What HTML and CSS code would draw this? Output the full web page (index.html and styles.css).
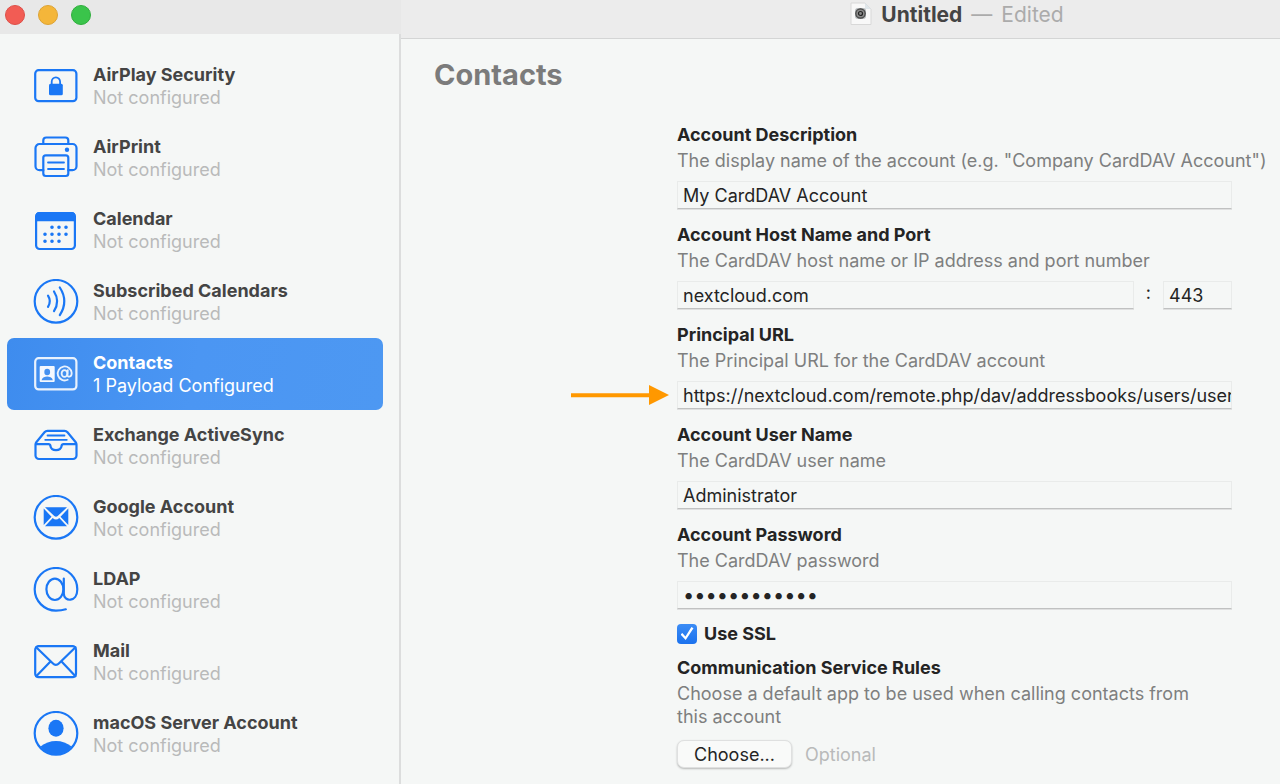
FILE: index.html
```html
<!DOCTYPE html>
<html lang="en">
<head>
    <meta charset="utf-8">
    <title>Untitled</title>
    <link rel="stylesheet" href="styles.css">
</head>
<body>
<div class="window">
    <aside class="sidebar">
        <div class="window-buttons">
            <button class="dot red" aria-label="Close"></button>
            <button class="dot yellow" aria-label="Minimize"></button>
            <button class="dot green" aria-label="Zoom"></button>
        </div>
        <nav class="payloads">
            <a class="payload" href="#airplay">
                <svg class="icon" viewBox="0 0 46 46">
                    <rect x="2.2" y="7.2" width="41.2" height="31" rx="3.5"/>
                    <rect class="fill" x="16" y="20.7" width="13.8" height="11.6" rx="1.5"/>
                    <path class="thin" d="M18.7 21v-2.2a4.2 4.4 0 0 1 8.4 0V21"/>
                </svg>
                <span class="payload-text"><b>AirPlay Security</b><span>Not configured</span></span>
            </a>
            <a class="payload" href="#airprint">
                <svg class="icon" viewBox="0 0 46 46">
                    <path d="M10.3 9V5.5a3 3 0 0 1 3-3h19a3 3 0 0 1 3 3V9"/>
                    <path d="M10.3 35.2H6.5a4 4 0 0 1-4-4V13a4 4 0 0 1 4-4h33a4 4 0 0 1 4 4v18.2a4 4 0 0 1-4 4h-4.2"/>
                    <rect x="10.3" y="20.3" width="25" height="20.7" rx="2.5"/>
                    <path class="thin" d="M15 27.5h16M15 34h16"/>
                    <circle class="fill" cx="34" cy="14.7" r="2.2"/>
                </svg>
                <span class="payload-text"><b>AirPrint</b><span>Not configured</span></span>
            </a>
            <a class="payload" href="#calendar">
                <svg class="icon" viewBox="0 0 46 46">
                    <rect x="3.1" y="6" width="38.8" height="36" rx="3.5"/>
                    <path class="fill" d="M2.5 16V9a4 4 0 0 1 4-4h32a4 4 0 0 1 4 4v7q0-1.700-2-1.700h-36q-2 0-2 1.700z"/>
                    <path class="dots" d="M19 20.300h0M26 20.300h0M33 20.300h0M12 27.300h0M19 27.300h0M26 27.300h0M33 27.300h0M12 34.300h0M19 34.300h0M26 34.300h0"/>
                </svg>
                <span class="payload-text"><b>Calendar</b><span>Not configured</span></span>
            </a>
            <a class="payload" href="#subscribed">
                <svg class="icon" viewBox="0 0 46 46">
                    <circle cx="23" cy="22.3" r="21.3"/>
                    <path d="M15 16.7q3.600 5.600 0 11.200M21 12.500q6.300 9.800 0 19.600M26.800 8.500q9 13.800 0 27.600"/>
                </svg>
                <span class="payload-text"><b>Subscribed Calendars</b><span>Not configured</span></span>
            </a>
            <a class="payload selected" href="#contacts" aria-current="page">
                <svg class="icon" viewBox="0 0 46 46">
                    <rect x="2.2" y="7.2" width="41.2" height="31.2" rx="3.5"/>
                    <rect class="fill" x="6.7" y="15" width="15" height="16" rx="1"/>
                    <ellipse class="cut" cx="14.2" cy="21" rx="2.9" ry="3.3"/>
                    <path class="cut" d="M8.500 29.300c1-3 3.300-3.700 5.700-3.700s4.700.7 5.700 3.700z"/>
                    <ellipse class="thin" cx="31.5" cy="22.5" rx="2.9" ry="3.4"/>
                    <path class="thin" d="M34.800 19.200l-.4 4.600c-.2 2.700 4.300 2.900 4.300-1.800a7 7 0 1 0-4 6.800"/>
                </svg>
                <span class="payload-text"><b>Contacts</b><span>1 Payload Configured</span></span>
            </a>
            <a class="payload" href="#exchange">
                <svg class="icon" viewBox="0 0 46 46">
                    <path d="M2.500 21.500v11a3.500 3.500 0 0 0 3.500 3.500h34a3.500 3.500 0 0 0 3.500-3.500v-11q0-1.200-.8-2.200l-8.200-10q-1.200-1.500-3-1.500h-17q-1.800 0-3 1.500l-8.200 10q-.8 1-.8 2.200z"/>
                    <path d="M3 21.200h12.500q1.700 0 1.900 1.800c1 5.600 10.200 5.600 11.200 0q.2-1.800 1.900-1.800H43"/>
                    <path class="thin" d="M14.500 12.500h17M12.200 16.800h21.600"/>
                </svg>
                <span class="payload-text"><b>Exchange ActiveSync</b><span>Not configured</span></span>
            </a>
            <a class="payload" href="#google">
                <svg class="icon" viewBox="0 0 46 46">
                    <circle cx="23" cy="22.3" r="21.3"/>
                    <path class="fill" d="M12 12.300h22l-9.300 8.800q-1.700 1.500-3.400 0zM10.700 13.500l7.800 8.200-7.800 8.200zM35.300 13.500v16.400l-7.800-8.200zM12 31.300l7.700-8.300q3.300 3 6.600 0l7.700 8.300z"/>
                </svg>
                <span class="payload-text"><b>Google Account</b><span>Not configured</span></span>
            </a>
            <a class="payload" href="#ldap">
                <svg class="icon" viewBox="0 0 46 46">
                    <ellipse cx="21.9" cy="22.3" rx="8.5" ry="10.7"/>
                    <path d="M30.800 11.500v15c0 8.600 13.500 9.300 13.500-4.200A21.300 21.300 0 1 0 23 43.600q5.500 0 9.800-1.300"/>
                </svg>
                <span class="payload-text"><b>LDAP</b><span>Not configured</span></span>
            </a>
            <a class="payload" href="#mail">
                <svg class="icon" viewBox="0 0 46 46">
                    <rect x="2.2" y="7.2" width="40.8" height="31" rx="3.5"/>
                    <path d="M3.200 8.200l16.500 16q3.200 3.300 6.400 0l16.400-16M3.200 37.200L17 23M42.500 37.200L29 23"/>
                </svg>
                <span class="payload-text"><b>Mail</b><span>Not configured</span></span>
            </a>
            <a class="payload" href="#server">
                <svg class="icon" viewBox="0 0 46 46">
                    <circle cx="23" cy="22.3" r="21.3"/>
                    <ellipse class="fill" cx="23" cy="17.2" rx="7.6" ry="8.5"/>
                    <path class="fill" d="M7.500 35.500C16 28 30 28 38.500 35.500 32 45.500 14 45.500 7.500 35.500z"/>
                </svg>
                <span class="payload-text"><b>macOS Server Account</b><span>Not configured</span></span>
            </a>
        </nav>
    </aside>
    <main class="main">
        <header class="titlebar">
            <svg class="doc-icon" viewBox="0 0 22 24">
                <path d="M1 1h14l6 6v15.500H1z" fill="#f8f8f8" stroke="#d8d8d8"/>
                <path d="M15 1v6h6z" fill="#dfe6ea"/>
                <rect x="5" y="6" width="11" height="11" rx="3" fill="#b5b9bb"/>
                <circle cx="10.5" cy="11.5" r="4.7" fill="#8a8a8a" stroke="#444" stroke-width="1.2"/>
                <circle cx="10.5" cy="11.5" r="2" fill="none" stroke="#222" stroke-width="1.2"/>
            </svg>
            <b>Untitled</b>
            <span>—</span>
            <span>Edited</span>
        </header>
        <h1 class="heading">Contacts</h1>
        <form class="form">
            <div class="field">
                <label for="description">Account Description</label>
                <p>The display name of the account (e.g. "Company CardDAV Account")</p>
                <input class="text" id="description" type="text" value="My CardDAV Account">
            </div>
            <div class="field">
                <label for="host">Account Host Name and Port</label>
                <p>The CardDAV host name or IP address and port number</p>
                <div class="host-row">
                    <input class="text" id="host" type="text" value="nextcloud.com">
                    <span>:</span>
                    <input class="text port" type="text" value="443" aria-label="Port">
                </div>
            </div>
            <div class="field">
                <label for="url">Principal URL</label>
                <p>The Principal URL for the CardDAV account</p>
                <div class="url-row">
                    <svg class="arrow" viewBox="0 0 98 20">
                        <path d="M0 8.200h78V0l20 10-20 10v-7.800H0z"/>
                    </svg>
                    <input class="text" id="url" type="text" value="https://nextcloud.com/remote.php/dav/addressbooks/users/user">
                </div>
            </div>
            <div class="field">
                <label for="user">Account User Name</label>
                <p>The CardDAV user name</p>
                <input class="text" id="user" type="text" value="Administrator">
            </div>
            <div class="field">
                <label for="password">Account Password</label>
                <p>The CardDAV password</p>
                <input class="text password" id="password" type="password" value="abcdefghijkl">
            </div>
            <div class="ssl">
                <input id="ssl" type="checkbox" checked>
                <label for="ssl">Use SSL</label>
            </div>
            <div class="field rules">
                <label for="choose">Communication Service Rules</label>
                <p>Choose a default app to be used when calling contacts from this account</p>
                <div class="choose-row">
                    <button class="choose" id="choose" type="button">Choose...</button>
                    <span>Optional</span>
                </div>
            </div>
        </form>
    </main>
</div>
</body>
</html>
```
FILE: styles.css
```css
* {
    box-sizing: border-box;
}

body {
    margin: 0;
    background-color: #f5f7f6;
    color: #242424;
    font-family: Inter, sans-serif;
    font-size: 18px;
    line-height: 23px;
}

b, label {
    font-weight: 700;
}

.window {
    display: flex;
    height: 100vh;
    overflow: hidden;
}

.sidebar {
    flex: 0 0 401px;
}

.window-buttons {
    display: flex;
    gap: 13px;
    height: 34px;
    padding: 5px;
    background-color: #e8e8e8;
}

.dot {
    width: 20px;
    height: 20px;
    padding: 0;
    border: 1px solid #dd4f48;
    border-radius: 50%;
    background-color: #f25c54;
}

.yellow {
    border-color: #dda334;
    background-color: #f4b63a;
}

.green {
    border-color: #2fae3d;
    background-color: #3ac44b;
}

.payloads {
    height: calc(100vh - 34px);
    padding: 16px 16px 0 7px;
    border-right: 2px solid #dcdddd;
}

.payload {
    display: flex;
    align-items: center;
    gap: 14px;
    height: 72px;
    padding-left: 26px;
    border-radius: 7px;
    color: #b9baba;
    text-decoration: none;
}

.payload b {
    color: #444;
}

.payload-text {
    display: flex;
    flex-direction: column;
    padding-bottom: 1px;
}

.selected {
    background: linear-gradient(100deg, #3e8cee, #4b96f3 50%, #4d98f2);
}

.selected, .selected b {
    color: #fff;
}

.icon {
    width: 46px;
    height: 46px;
    fill: none;
    stroke: #1a77f5;
    stroke-width: 2.2;
    stroke-linecap: round;
}

.icon .thin {
    stroke-width: 1.8;
}

.icon .dots {
    stroke-width: 3.6;
}

.icon .fill {
    fill: #1a77f5;
    stroke: none;
}

.selected .icon {
    stroke: #e9f2fd;
}

.selected .icon .fill {
    fill: #f4f8fe;
}

.selected .icon .cut {
    fill: #4390f0;
    stroke: none;
}

.main {
    flex: 1;
    min-width: 0;
}

.titlebar {
    display: flex;
    align-items: center;
    justify-content: center;
    gap: 9px;
    height: 39px;
    padding: 0 0 10px 233px;
    border-bottom: 1px solid #d4d5d5;
    background-color: #ececec;
    color: #ababab;
    font-size: 21px;
}

.titlebar b {
    color: #444;
}

.doc-icon {
    width: 22px;
    height: 24px;
}

.heading {
    margin: 18px 33px 0;
    color: #7b7b7b;
    font-size: 29px;
    font-weight: 700;
    line-height: 36px;
}

.form {
    margin: 30px 48px 0 276px;
}

.field {
    display: flex;
    flex-direction: column;
    margin-bottom: 14px;
}

.field p {
    margin: 3px 0 9px;
    color: #7e7f7f;
    white-space: nowrap;
}

.text {
    width: 100%;
    height: 28px;
    padding: 0 0 0 5px;
    border: 1px solid #e9ebea;
    border-bottom-color: #c0c1c1;
    background-color: #f5f7f6;
    box-shadow: 0 1px 0 #dfe0e0;
    color: #242424;
    font: inherit;
}

.password {
    font-size: 20px;
}

.host-row {
    display: flex;
    gap: 12px;
}

.host-row .port {
    flex: 0 0 69px;
}

.url-row {
    position: relative;
}

.arrow {
    position: absolute;
    top: 4px;
    right: 100%;
    width: 98px;
    height: 20px;
    margin-right: 8px;
    fill: #ff9800;
}

.ssl {
    display: flex;
    align-items: center;
    gap: 7px;
    margin: -1px 0 11px;
}

.ssl input {
    display: grid;
    place-items: center;
    width: 20px;
    height: 20px;
    margin: 0;
    border-radius: 4px;
    background: linear-gradient(#3b8cf5, #1b72ee);
    appearance: none;
}

.ssl input:checked::after {
    content: "";
    width: 13px;
    height: 13px;
    background-color: #fff;
    clip-path: polygon(0 57%, 14% 47%, 38% 74%, 84% 0, 100% 9%, 40% 100%);
}

.rules p {
    margin: 3px 32px 12px 0;
    white-space: normal;
}

.choose-row {
    display: flex;
    align-items: center;
    gap: 13px;
    color: #b9baba;
}

.choose {
    width: 115px;
    height: 28px;
    padding: 0;
    border: 1px solid #dfe0e0;
    border-radius: 7px;
    background-color: #f9faf9;
    box-shadow: 0 1px 2px rgba(0, 0, 0, 0.25);
    color: #242424;
    font: inherit;
}
```
